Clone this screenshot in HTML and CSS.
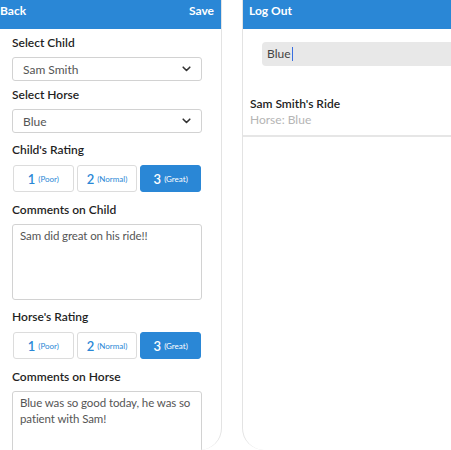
FILE: index.html
```html
<!DOCTYPE html>
<html>
<head>
<meta charset="utf-8">
<link rel="stylesheet" href="styles.css">
</head>
<body>
<div class="stage">
  <div class="screen left">
    <div class="nav">
      <span class="nav-btn">Back</span>
      <span class="nav-btn">Save</span>
    </div>
    <div class="form">
      <div class="field first">
        <div class="label">Select Child</div>
        <div class="select"><span>Sam Smith</span>
          <svg class="chev" width="9" height="6" viewBox="0 0 9 6"><path d="M1.2 1.2 L4.5 4.5 L7.8 1.2" fill="none" stroke="#333" stroke-width="1.6" stroke-linecap="round" stroke-linejoin="round"/></svg>
        </div>
      </div>
      <div class="field first">
        <div class="label">Select Horse</div>
        <div class="select"><span>Blue</span>
          <svg class="chev" width="9" height="6" viewBox="0 0 9 6"><path d="M1.2 1.2 L4.5 4.5 L7.8 1.2" fill="none" stroke="#333" stroke-width="1.6" stroke-linecap="round" stroke-linejoin="round"/></svg>
        </div>
      </div>
      <div class="field">
        <div class="label label-r">Child's Rating</div>
        <div class="rating">
          <div class="rbtn"><span class="num">1</span><span class="sub">(Poor)</span></div>
          <div class="rbtn"><span class="num">2</span><span class="sub">(Normal)</span></div>
          <div class="rbtn active"><span class="num">3</span><span class="sub">(Great)</span></div>
        </div>
      </div>
      <div class="field after-r">
        <div class="label">Comments on Child</div>
        <div class="textarea">Sam did great on his ride!!</div>
      </div>
      <div class="field">
        <div class="label label-r">Horse's Rating</div>
        <div class="rating">
          <div class="rbtn"><span class="num">1</span><span class="sub">(Poor)</span></div>
          <div class="rbtn"><span class="num">2</span><span class="sub">(Normal)</span></div>
          <div class="rbtn active"><span class="num">3</span><span class="sub">(Great)</span></div>
        </div>
      </div>
      <div class="field after-r">
        <div class="label">Comments on Horse</div>
        <div class="textarea">Blue was so good today, he was so patient with Sam!</div>
      </div>
    </div>
  </div>
  <div class="screen right">
    <div class="nav">
      <span class="nav-btn">Log Out</span>
      <span class="nav-btn">New</span>
    </div>
    <div class="search-wrap">
      <div class="search">Blue<span class="caret"></span></div>
    </div>
    <div class="item">
      <div class="item-title">Sam Smith's Ride</div>
      <div class="item-sub">Horse: Blue</div>
    </div>
  </div>
</div>
</body>
</html>
```
FILE: styles.css
```css
* { box-sizing: border-box; }
html, body { margin: 0; padding: 0; background: #fff; }
body {
  font-family: Lato, "Noto Sans", sans-serif;
  color: #222;
  width: 451px;
  height: 450px;
  overflow: hidden;
}
.stage {
  display: flex;
  gap: 20px;
  height: 470px;
  align-items: flex-start;
}
.screen {
  height: 450px;
  flex-shrink: 0;
  position: relative;
  overflow: hidden;
}
.screen.left {
  width: 222px;
  border-right: 1px solid #e3e3e3;
  border-bottom-right-radius: 22px;
}
.screen.right {
  width: 240px;
  border-left: 1px solid #e3e3e3;
  border-bottom-left-radius: 22px;
}
.nav {
  height: 29px;
  background: #2a87d6;
  display: flex;
  justify-content: space-between;
  align-items: flex-start;
  padding: 3px 8px 0 0;
  color: #fff;
  font-weight: 700;
  font-size: 12px;
  line-height: 15px;
}
.screen.left .nav { margin-right: -1px; }
.screen.right .nav { margin-left: -1px; padding-left: 7px; padding-right: 0; }
.form { padding: 0 19px 0 12px; }
.field { margin-top: 9px; }
.field.first { margin-top: 6px; }
.field.after-r { margin-top: 10px; }
.label {
  font-size: 12px;
  font-weight: 600;
  line-height: 16px;
  margin-bottom: 6px;
  color: #1f1f1f;
}
.label.label-r { margin-bottom: 7px; }
.select {
  height: 24px;
  border: 1px solid #d2d2d2;
  border-radius: 3px;
  display: flex;
  align-items: center;
  justify-content: space-between;
  padding: 0 10px 0 10px;
  font-size: 12px;
  color: #555;
}
.chev { display: block; }
.rating {
  display: flex;
  gap: 3px;
  padding: 0 1px;
}
.rbtn {
  flex: 1;
  height: 27px;
  border: 1px solid #dcdcdc;
  border-radius: 3px;
  display: flex;
  align-items: center;
  justify-content: center;
  gap: 3px;
  color: #2a87d6;
}
.rbtn.active {
  background: #2a87d6;
  border-color: #2a87d6;
  color: #fff;
}
.num { font-size: 13px; font-weight: 600; }
.sub { font-size: 8px; }
.textarea {
  height: 76px;
  border: 1px solid #d2d2d2;
  border-radius: 3px;
  padding: 3px 4px 3px 7px;
  font-size: 11.5px;
  line-height: 16px;
  color: #555;
  letter-spacing: -0.1px;
}
.search-wrap { padding: 13px 0 0 19px; }
.search {
  height: 24px;
  background: #e8e8e8;
  border-radius: 4px 0 0 4px;
  font-size: 12px;
  line-height: 24px;
  padding-left: 5px;
  color: #444;
  display: flex;
  align-items: center;
}
.caret {
  display: inline-block;
  width: 1px;
  height: 14px;
  background: #3a6fe0;
  margin-left: 1px;
}
.item {
  margin-top: 30px;
  padding: 0 0 7px 7px;
  border-bottom: 2px solid #e6e6e6;
}
.item-title {
  font-size: 12px;
  font-weight: 600;
  line-height: 16px;
  color: #222;
}
.item-sub {
  font-size: 12px;
  line-height: 16px;
  color: #b5b5b5;
}
```
